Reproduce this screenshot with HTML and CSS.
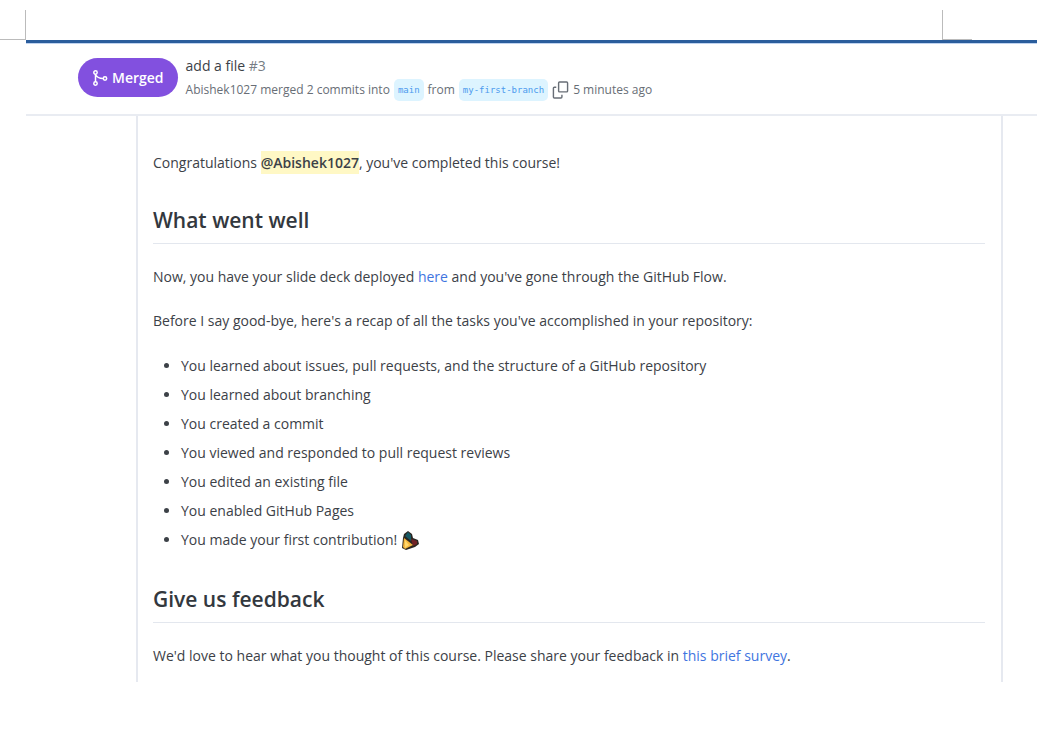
FILE: index.html
```html
<!DOCTYPE html>
<html lang="en">
<head>
<meta charset="utf-8">
<title>add a file #3</title>
<link rel="stylesheet" href="styles.css">
</head>
<body>
<div class="margin-marks"><span class="mark mark-left"></span><span class="mark mark-right"></span></div>
<main class="sheet">
  <header class="pr-header">
    <span class="state">
      <svg class="state-icon" viewBox="0 0 16 18" aria-hidden="true"><g fill="none" stroke="currentColor" stroke-width="1.500"><circle cx="3.500" cy="3.500" r="1.700"/><circle cx="3.500" cy="14.500" r="1.700"/><circle cx="13" cy="9.500" r="1.700"/><path d="M3.500 5v8M3.500 5.500Q5.500 9.500 11 9.500"/></g></svg>
      Merged
    </span>
    <div class="summary">
      <h1 class="pr-title">add a file <span class="number">#3</span></h1>
      <p class="meta"><span><span class="author">Abishek1027</span> merged 2 commits into</span> <code class="branch">main</code> from <code class="branch">my-first-branch</code>
        <button class="copy" type="button" aria-label="Copy branch name"><svg viewBox="0 0 18 20" aria-hidden="true"><path fill="none" stroke="currentColor" stroke-width="1.500" d="M8 1.500h7.500q1 0 1 1v8.500q0 1-1 1H8q-1 0-1-1V2.500q0-1 1-1zM4.500 7H2.500q-1 0-1 1v9.500q0 1 1 1h7q1 0 1-1V15"/></svg></button>5 minutes ago</p>
    </div>
  </header>
  <article class="comment">
    <p>Congratulations <strong class="mention">@Abishek1027</strong>, you've completed this course!</p>
    <h2>What went well</h2>
    <p>Now, you have your slide deck deployed <a href="#deck">here</a> and you've gone through the GitHub Flow.</p>
    <p>Before I say good-bye, here's a recap of all the tasks you've accomplished in your repository:</p>
    <ul>
      <li>You learned about issues, pull requests, and the structure of a GitHub repository</li>
      <li>You learned about branching</li>
      <li>You created a commit</li>
      <li>You viewed and responded to pull request reviews</li>
      <li>You edited an existing file</li>
      <li>You enabled GitHub Pages</li>
      <li>You made your first contribution! <svg class="party" viewBox="0 0 18 20" role="img" aria-label="Party popper"><path fill="#2b2722" d="M2 7L3 3l4-3 4 3 1 4 5 2 1 4-4 3-9 3-4-2z"/><path fill="#175964" d="M4 5l3-4 3 3v6z"/><path fill="#702326" d="M10 8l6 2v3l-4 2z"/><path fill="#f4b63f" d="M3 7l9 7-8 4-2-2z"/><path fill="#ffd76c" d="M4 9l4 5-4 3z"/></svg></li>
    </ul>
    <h2>Give us feedback</h2>
    <p>We'd love to hear what you thought of this course. Please share your feedback in <a href="#survey">this brief survey</a>.</p>
  </article>
</main>
</body>
</html>
```
FILE: styles.css
```css
* { box-sizing: border-box; }
body {
  margin: 0;
  background: #fff;
  color: #3c4147;
  font: 14px/20px "Open Sans", "Noto Sans", sans-serif;
}
.margin-marks {
  display: flex;
  justify-content: space-between;
  height: 40px;
  padding: 10px 74px 0 0;
}
.mark { border-bottom: 1px solid #bbb; }
.mark-left { width: 26px; border-right: 1px solid #bbb; }
.mark-right { width: 30px; border-left: 1px solid #bbb; }
.sheet {
  margin: 0 9px 0 26px;
  border-top: 3px solid #2a5d9c;
}
.pr-header {
  display: flex;
  align-items: flex-start;
  gap: 8px;
  height: 73px;
  padding: 12px 0 0 52px;
  border-top: 1px solid #bfd3f0;
  border-bottom: 2px solid #e9ecf2;
}
.state {
  display: flex;
  align-items: center;
  gap: 4px;
  height: 39px;
  margin-top: 2px;
  padding: 0 14px;
  border-radius: 20px;
  background: #8250df;
  color: #fff;
  font-weight: 600;
}
.state-icon { width: 16px; height: 18px; }
.pr-title {
  margin: 0;
  font-size: 14px;
  font-weight: 500;
  line-height: 20px;
}
.number { color: #777d84; font-weight: 400; }
.meta {
  display: flex;
  align-items: center;
  gap: 4px;
  margin: 2px 0 0;
  color: #686e76;
  font-size: 12px;
  line-height: 24px;
  white-space: nowrap;
}
.author { font-weight: 500; }
.branch {
  padding: 0 4px;
  border-radius: 5px;
  background: #ddf4ff;
  color: #4c9aee;
  font: 9px/22px "DejaVu Sans Mono", monospace;
}
.copy {
  display: flex;
  padding: 0;
  border: 0;
  background: none;
  color: #686e76;
}
.copy svg { width: 17px; height: 20px; }
.comment {
  margin: 0 34px 0 110px;
  padding: 37px 16px 16px 15px;
  border: solid #e6e9f0;
  border-width: 0 2px;
}
.comment p { margin: 0 0 24px; }
.comment p:last-child { margin-bottom: 0; }
.comment h2 {
  margin: 0 0 23px;
  padding: 8px 0;
  border-bottom: 1px solid #e3e7ee;
  color: #33383e;
  font-size: 21px;
  font-weight: 600;
  line-height: 30px;
}
.mention { padding: 2px 0; background: #fff8c5; font-weight: 600; }
a { color: #3f75df; text-decoration: none; }
ul { margin: -4px 0 22px; padding-left: 28px; }
li { line-height: 29px; }
.party { width: 18px; height: 20px; vertical-align: middle; }
```
